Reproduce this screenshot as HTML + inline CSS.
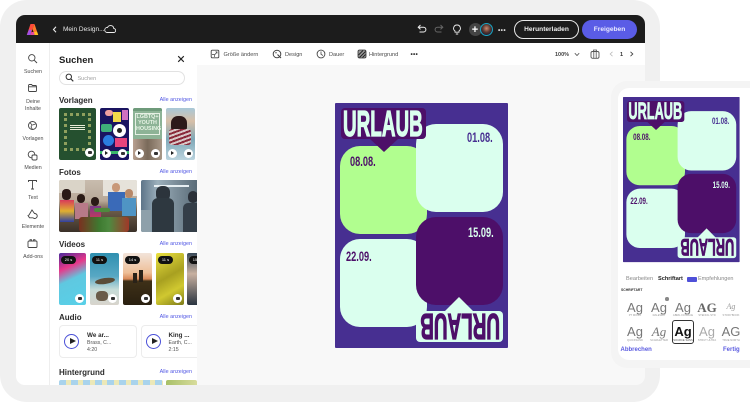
<!DOCTYPE html>
<html><head><meta charset="utf-8">
<style>
html,body{margin:0;padding:0;background:#fff;}
#r{position:relative;width:750px;height:402px;overflow:hidden;background:#fff;font-family:"Liberation Sans",sans-serif;color:#2c2c2c;}
#r div,#r span.a,#r svg{position:absolute;}
.t{white-space:nowrap;line-height:1;}
.nl{width:34px;left:16px;text-align:center;font-size:5.3px;color:#4b4b4b;line-height:7px;margin-top:1.5px;}
.h{left:59px;font-size:8px;font-weight:bold;color:#2c2c2c;white-space:nowrap;line-height:1;margin-top:1px;}
.al{left:140px;width:52px;text-align:right;font-size:5.4px;color:#5258e4;white-space:nowrap;line-height:1;margin-top:1.5px;}
.th{overflow:hidden;border-radius:2px;}
.bt{width:9px;height:9px;border-radius:50%;background:#fff;}
.bt:after{content:"";position:absolute;left:2.5px;top:3px;width:4px;height:3px;background:#333;border-radius:1px;}
.pl{width:9px;height:9px;border-radius:50%;background:#fff;}
.pl:after{content:"";position:absolute;left:3.2px;top:2.2px;border-left:3.6px solid #222;border-top:2.3px solid transparent;border-bottom:2.3px solid transparent;}
.dur{left:2px;top:3px;width:15px;height:8px;background:#111;border-radius:4px;color:#fff;font-size:4px;line-height:8px;text-align:center;}
.tb{font-size:5.6px;color:#4b4b4b;white-space:nowrap;line-height:1;top:52.5px;}
.ag{width:24px;text-align:center;line-height:1;color:#777;font-size:13px;}
.fl{width:24px;text-align:center;font-size:2.7px;color:#999;line-height:1;white-space:nowrap;}
.card{background:#fff;border:1px solid #ececec;border-radius:4px;box-sizing:border-box;}
.poster{width:173px;height:245px;background:#472f91;border-radius:1px;overflow:hidden;transform-origin:0 0;}
.u{font-family:"Liberation Sans",sans-serif;font-weight:bold;font-size:36px;white-space:nowrap;line-height:1;transform-origin:0 0;-webkit-text-stroke:1.2px currentColor;}
.d{font-family:"Liberation Sans",sans-serif;font-weight:bold;font-size:14px;white-space:nowrap;line-height:1;transform-origin:0 0;transform:scaleX(.66);}
</style></head><body>
<div id="r">
<!-- frame -->
<div style="left:0;top:0;width:660px;height:402px;background:#f0f0f0;border-radius:27px;"></div>
<!-- window -->
<div style="left:16px;top:15px;width:629px;height:370px;background:#f8f8f8;border-radius:9px;overflow:hidden;">
 <div style="left:0;top:0;width:629px;height:28px;background:#1c1c1c;"></div>
 <div style="left:0;top:28px;width:33px;height:342px;background:#fff;border-right:1px solid #eee;"></div>
 <div style="left:34px;top:28px;width:147px;height:342px;background:#fff;"></div>
 <div style="left:181px;top:28px;width:448px;height:22px;background:#fff;"></div>
</div>
<!-- topbar -->
<svg style="left:26px;top:23px" width="13" height="13" viewBox="0 0 13 13"><path d="M4.500 1h4L6.500 6 4.500 12H.8z" fill="#ff4a3a"/><path d="M.8 12 3 6.500 5.500 7 4.500 12z" fill="#a050e8"/><path d="M8.500 1l3.700 11H8.500L6.500 6z" fill="#ff7a2a"/><path d="M8.500 12h3.700L11 8.500 8 9z" fill="#ffc020"/><path d="M4.500 12 5.500 9H8l.5 3z" fill="#e04aa0"/></svg>
<svg style="left:52px;top:26px" width="6" height="7" viewBox="0 0 6 7"><path d="M4 .8 1.500 3.500 4 6.200" fill="none" stroke="#eee" stroke-width="1.100"/></svg>
<div class="t" style="left:63px;top:27px;font-size:6.500px;color:#e8e8e8;">Mein Design...</div>
<svg style="left:104px;top:24px" width="12" height="10" viewBox="0 0 12 10"><path d="M3 8.500h6.500a2 2 0 0 0 .3-4 3.300 3.300 0 0 0-6.300-1A2.500 2.500 0 0 0 3 8.500z" fill="none" stroke="#eee" stroke-width=".9"/></svg>
<svg style="left:417px;top:24px" width="10" height="10" viewBox="0 0 10 10"><path d="M3.500 1 1.200 3.200 3.500 5.400M1.500 3.200h5a2.300 2.300 0 0 1 0 4.800H2.500" fill="none" stroke="#eee" stroke-width="1"/></svg>
<svg style="left:434px;top:24px" width="10" height="10" viewBox="0 0 10 10"><path d="M6.500 1 8.800 3.200 6.500 5.400M8.500 3.200h-5a2.300 2.300 0 0 0 0 4.800h4" fill="none" stroke="#666" stroke-width="1"/></svg>
<svg style="left:452px;top:24px" width="10" height="11" viewBox="0 0 10 11"><path d="M5 1a3.300 3.300 0 0 0-2 6v1.200h4V7a3.300 3.300 0 0 0-2-6zM3.800 10h2.400" fill="none" stroke="#eee" stroke-width=".9"/></svg>
<div style="left:469px;top:23px;width:13px;height:13px;border-radius:50%;background:#444;"></div>
<div class="t" style="left:470px;top:23.500px;width:10px;text-align:center;color:#fff;font-size:11px;font-weight:bold;line-height:12px;">+</div>
<div style="left:480px;top:23px;width:11px;height:11px;border-radius:50%;background:radial-gradient(circle at 50% 40%,#c98a70 0,#5a3830 45%,#2b2230 70%);border:1.200px solid #19a5c4;"></div>
<div class="t" style="left:498px;top:27.500px;color:#ddd;font-size:6.500px;font-weight:bold;letter-spacing:.4px;line-height:5px;">•••</div>
<div class="t" style="left:514px;top:20px;width:65px;height:19px;box-sizing:border-box;border:1px solid #e8e8e8;border-radius:10px;color:#eee;font-size:6.600px;font-weight:bold;text-align:center;line-height:17px;">Herunterladen</div>
<div class="t" style="left:582px;top:20px;width:55px;height:19px;background:#5a5ce6;border-radius:10px;color:#e8e8ff;font-size:6.600px;font-weight:bold;text-align:center;line-height:19px;">Freigeben</div>

<!-- left nav -->
<svg style="left:27px;top:53px" width="11" height="11" viewBox="0 0 11 11"><circle cx="4.800" cy="4.800" r="3.200" fill="none" stroke="#444" stroke-width=".9"/><path d="M7.200 7.200 10 10" stroke="#444" stroke-width="1"/></svg>
<div class="nl" style="top:67px;">Suchen</div>
<svg style="left:27px;top:83px" width="11" height="10" viewBox="0 0 11 10"><path d="M1.500 2.500a1 1 0 0 1 1-1h2l1 1h3a1 1 0 0 1 1 1v4a1 1 0 0 1-1 1h-6a1 1 0 0 1-1-1zM1.500 3.800h8" fill="none" stroke="#444" stroke-width=".9"/></svg>
<div class="nl" style="top:97px;">Deine<br>Inhalte</div>
<svg style="left:27px;top:120px" width="11" height="11" viewBox="0 0 11 11"><circle cx="5.500" cy="5.500" r="4" fill="none" stroke="#444" stroke-width=".9"/><path d="M3 2.500l2 2.500-1 2 1.500 2.500M5.500 5l3-1" fill="none" stroke="#444" stroke-width=".8"/></svg>
<div class="nl" style="top:134px;">Vorlagen</div>
<svg style="left:27px;top:150px" width="11" height="11" viewBox="0 0 11 11"><circle cx="4.500" cy="4.500" r="3.300" fill="none" stroke="#444" stroke-width=".9"/><rect x="5" y="5" width="5" height="5" rx="1.200" fill="#fff" stroke="#444" stroke-width=".9"/></svg>
<div class="nl" style="top:163px;">Medien</div>
<svg style="left:27px;top:179px" width="11" height="11" viewBox="0 0 11 11"><path d="M1.500 3V1.500h8V3M5.500 1.500v8.500M4 10h3" fill="none" stroke="#444" stroke-width=".9"/></svg>
<div class="nl" style="top:193px;">Text</div>
<svg style="left:27px;top:208px" width="11" height="11" viewBox="0 0 11 11"><path d="M2 7l3-5 2.500 3.500a2.500 2.500 0 1 1-1.500 4.300H2.500L1 7.500z" fill="none" stroke="#444" stroke-width=".9"/></svg>
<div class="nl" style="top:222px;">Elemente</div>
<svg style="left:27px;top:238px" width="11" height="11" viewBox="0 0 11 11"><rect x="1" y="3" width="9" height="6.500" rx="1" fill="none" stroke="#444" stroke-width=".9"/><path d="M3 3V1.700h1.500V3M6.500 3V1.700H8V3" fill="none" stroke="#444" stroke-width=".8"/></svg>
<div class="nl" style="top:252px;">Add-ons</div>

<!-- panel -->
<div class="t" style="left:59px;top:56px;font-size:9.500px;font-weight:bold;color:#222;">Suchen</div>
<svg style="left:177px;top:55px" width="8" height="8" viewBox="0 0 8 8"><path d="M1.200 1.200l5.600 5.600M6.800 1.200 1.200 6.800" stroke="#222" stroke-width="1.100"/></svg>
<div style="left:59px;top:71px;width:126px;height:14px;box-sizing:border-box;border:1px solid #e2e2e2;border-radius:7px;background:#fff;"></div>
<svg style="left:65px;top:73px" width="9" height="9" viewBox="0 0 9 9"><circle cx="3.800" cy="3.800" r="2.700" fill="none" stroke="#333" stroke-width="1"/><path d="M5.800 5.800 8.300 8.300" stroke="#333" stroke-width="1.100"/></svg>
<div class="t" style="left:77.500px;top:76.500px;font-size:5.500px;color:#a0a0a0;">Suchen</div>

<div class="h" style="top:96px;">Vorlagen</div><div class="al" style="top:96px;">Alle anzeigen</div>
<div class="th" style="left:59px;top:108px;width:37px;height:52px;background:#25502f;">
 <div style="left:5px;top:5px;width:27px;height:38px;border:3px dotted #8fa05e;box-sizing:border-box;"></div>
 <div style="left:11px;top:17px;width:15px;height:6px;background:repeating-linear-gradient(#e8ecd8 0 1px,#25502f 1px 2px);"></div>
 <div class="bt" style="left:26px;top:40px;"></div>
</div>
<div class="th" style="left:100px;top:108px;width:29px;height:52px;background:#1a1460;">
 <div style="left:5px;top:2px;width:8px;height:6px;background:#f0a0a0;border-radius:3px;"></div>
 <div style="left:13px;top:4px;width:8px;height:10px;background:#f2d84a;"></div>
 <div style="left:22px;top:2px;width:6px;height:10px;background:#d070c0;"></div>
 <div style="left:1px;top:16px;width:11px;height:8px;background:#3fae7a;border-radius:2px;"></div>
 <div style="left:13px;top:16px;width:13px;height:13px;background:#fff;border-radius:50%;"></div>
 <div style="left:17px;top:20px;width:5px;height:5px;background:#222;border-radius:50%;"></div>
 <div style="left:3px;top:27px;width:11px;height:11px;background:#2a7de0;border-radius:50%;"></div>
 <div style="left:15px;top:30px;width:12px;height:9px;background:#e8447c;"></div>
 <div style="left:0;top:43px;width:29px;height:3px;background:#3ab86a;"></div>
 <div class="pl" style="left:1.500px;top:41px;"></div><div class="bt" style="left:18px;top:41px;"></div>
</div>
<div class="th" style="left:133px;top:108px;width:29px;height:52px;background:#8db396;">
 <div style="left:0;top:0;width:29px;height:3px;background:#6e9a7a;"></div>
 <div style="left:2px;top:5px;width:25px;height:22px;border:.7px solid #e6f0e4;box-sizing:border-box;"></div>
 <div class="t" style="left:3px;top:6px;width:23px;text-align:center;color:#e8f4e6;font-size:5.400px;font-weight:bold;line-height:6px;">LGBTQ+<br>YOUTH<br>HOUSING</div>
 <div style="left:0;top:31px;width:29px;height:21px;background:linear-gradient(90deg,#b8a090,#7a6a5a 50%,#a89888);"></div>
 <div class="pl" style="left:1.500px;top:41px;"></div><div class="bt" style="left:18px;top:41px;"></div>
</div>
<div class="th" style="left:166px;top:108px;width:29px;height:52px;background:linear-gradient(#a8c8d8 0,#d8c0a8 25%,#7fa8b8 60%,#bcd4de 100%);">
 <div style="left:5px;top:8px;width:16px;height:18px;background:#2d1a1a;border-radius:7px;"></div>
 <div style="left:3px;top:21px;width:22px;height:16px;background:repeating-linear-gradient(160deg,#8a2a3a 0 2px,#d8c8c8 2px 4px);border-radius:3px;"></div>
 <div class="pl" style="left:1.500px;top:41px;"></div><div class="bt" style="left:18px;top:41px;"></div>
</div>

<div class="h" style="top:168px;">Fotos</div><div class="al" style="top:168px;">Alle anzeigen</div>
<div class="th" style="left:59px;top:180px;width:78px;height:52px;background:linear-gradient(#c8bcae 0,#b8a898 40%,#6a5a48 60%,#3a3028 100%);">
 <div style="left:0;top:0;width:26px;height:13px;background:#dad4c8;"></div>
 <div style="left:44px;top:0;width:34px;height:16px;background:#e6e2da;"></div>
 <div style="left:3px;top:9px;width:9px;height:11px;background:#2a1a16;border-radius:4px;"></div>
 <div style="left:1px;top:20px;width:14px;height:22px;background:linear-gradient(#d83a5a,#e0b030,#3040a0);"></div>
 <div style="left:18px;top:14px;width:8px;height:9px;background:#2a1a16;border-radius:4px;"></div>
 <div style="left:16px;top:23px;width:13px;height:16px;background:#b87a88;"></div>
 <div style="left:32px;top:17px;width:8px;height:9px;background:#2a1a16;border-radius:4px;"></div>
 <div style="left:31px;top:26px;width:11px;height:13px;background:linear-gradient(#7a3a8a,#c83a5a);"></div>
 <div style="left:53px;top:3px;width:8px;height:9px;background:#c89878;border-radius:4px;"></div>
 <div style="left:49px;top:12px;width:17px;height:19px;background:#3a6ab8;"></div>
 <div style="left:66px;top:9px;width:8px;height:9px;background:#b88868;border-radius:4px;"></div>
 <div style="left:63px;top:18px;width:14px;height:18px;background:#4f94c4;"></div>
 <div style="left:35px;top:28px;width:16px;height:4px;background:#4e8a3e;border-radius:2px;"></div>
 <div style="left:20px;top:37px;width:50px;height:15px;background:linear-gradient(90deg,#7a3020,#3e7a30 40%,#4e8a40 60%,#a03828);border-radius:3px;"></div>
</div>
<div class="th" style="left:141px;top:180px;width:56px;height:52px;background:linear-gradient(90deg,#5e7488,#9cb0bc 30%,#7e909c 60%,#5a6c78);border-radius:2px 0 0 2px;">
 <div style="left:13px;top:5px;width:35px;height:1.500px;background:#e6eef2;"></div>
 <div style="left:15px;top:6px;width:14px;height:15px;background:#2c343c;border-radius:6px;"></div>
 <div style="left:11px;top:18px;width:22px;height:34px;background:#2e3840;border-radius:6px 6px 0 0;"></div>
 <div style="left:47px;top:11px;width:10px;height:12px;background:#2a3038;border-radius:5px;"></div>
 <div style="left:42px;top:23px;width:15px;height:29px;background:#343e48;border-radius:5px 0 0 0;"></div>
 <div style="left:0;top:30px;width:10px;height:22px;background:#8ea0aa;"></div>
</div>

<div class="h" style="top:240px;">Videos</div><div class="al" style="top:240px;">Alle anzeigen</div>
<div class="th" style="left:59px;top:253px;width:27px;height:52px;background:linear-gradient(155deg,#4a2a9a 0,#e8388a 28%,#5fc8e0 50%,#58d0e8 100%);"><div class="dur">20 s</div><div class="bt" style="left:16px;top:41px;"></div></div>
<div class="th" style="left:90px;top:253px;width:29px;height:52px;background:linear-gradient(#2f8fb0 0,#58a8c4 45%,#c6dcd8 70%,#d8d4cc 100%);">
 <div style="left:5px;top:25px;width:20px;height:6px;background:#5a4c38;border-radius:50%;transform:rotate(-8deg);"></div>
 <div style="left:6px;top:38px;width:12px;height:10px;background:#6a5c4a;border-radius:40%;"></div>
 <div class="dur">11 s</div><div class="bt" style="left:18px;top:41px;"></div></div>
<div class="th" style="left:123px;top:253px;width:29px;height:52px;background:linear-gradient(#f2e4da 0,#eebf98 38%,#d88a5a 50%,#3e3018 54%,#2a2010 100%);">
 <div style="left:10px;top:20px;width:4px;height:10px;background:#2a2218;"></div><div style="left:16px;top:17px;width:4px;height:12px;background:#2a2218;"></div>
 <div class="dur">14 s</div><div class="bt" style="left:18px;top:41px;"></div></div>
<div class="th" style="left:156px;top:253px;width:28px;height:52px;background:linear-gradient(150deg,#eae040 0,#a8a020 45%,#d0c830 70%,#7c7a18 100%);"><div class="dur">11 s</div><div class="bt" style="left:17px;top:41px;"></div></div>
<div class="th" style="left:187px;top:253px;width:10px;height:52px;background:linear-gradient(#384858,#c8b0a0 40%,#2a3440);border-radius:2px 0 0 2px;"><div class="dur" style="left:2px;">15 s</div></div>

<div class="h" style="top:312.500px;">Audio</div><div class="al" style="top:313px;">Alle anzeigen</div>
<div class="card" style="left:59px;top:325px;width:78px;height:33px;"></div>
<div class="card" style="left:141px;top:325px;width:60px;height:33px;"></div>
<div style="left:197px;top:320px;width:8px;height:42px;background:#f8f8f8;"></div>
<div style="left:64px;top:334px;width:15px;height:15px;box-sizing:border-box;border:1.400px solid #4a50d8;border-radius:50%;"></div>
<div style="left:69.500px;top:338px;border-left:6px solid #222;border-top:3.500px solid transparent;border-bottom:3.500px solid transparent;width:0;height:0;"></div>
<div style="left:146px;top:334px;width:15px;height:15px;box-sizing:border-box;border:1.400px solid #4a50d8;border-radius:50%;"></div>
<div style="left:151.500px;top:338px;border-left:6px solid #222;border-top:3.500px solid transparent;border-bottom:3.500px solid transparent;width:0;height:0;"></div>
<div class="t" style="left:87px;top:332.500px;font-size:6.300px;font-weight:bold;">We ar...</div>
<div class="t" style="left:87px;top:341px;font-size:5.200px;color:#555;">Brass, C...</div>
<div class="t" style="left:87px;top:348px;font-size:5.200px;color:#555;">4:20</div>
<div class="t" style="left:168.500px;top:332.500px;font-size:6.300px;font-weight:bold;">King ...</div>
<div class="t" style="left:168.500px;top:341px;font-size:5.200px;color:#555;">Earth, C...</div>
<div class="t" style="left:168.500px;top:348px;font-size:5.200px;color:#555;">2:15</div>

<div class="h" style="top:368px;">Hintergrund</div><div class="al" style="top:368px;">Alle anzeigen</div>
<div class="th" style="left:59px;top:380px;width:104px;height:5px;background:repeating-linear-gradient(90deg,#a9d3ec 0 7px,#ece8b8 7px 12px);border-radius:2px 2px 0 0;"></div>
<div class="th" style="left:166px;top:380px;width:31px;height:5px;background:linear-gradient(90deg,#a8c068,#d8dc9c);border-radius:2px 2px 0 0;"></div>

<!-- toolbar -->
<svg style="left:210px;top:49px" width="10" height="10" viewBox="0 0 10 10"><rect x="1.200" y="1.200" width="7.600" height="7.600" rx="1" fill="none" stroke="#444" stroke-width=".9"/><path d="M5 5.500 7 3M5.500 2.800H7v1.600M2 5.500h2.500V8" fill="none" stroke="#444" stroke-width=".7"/></svg>
<div class="tb t" style="left:223.500px;">Größe ändern</div>
<svg style="left:272px;top:49px" width="10" height="10" viewBox="0 0 10 10"><circle cx="5" cy="5" r="3.800" fill="none" stroke="#444" stroke-width="1"/><path d="M5.500 5.500 9 9" stroke="#444" stroke-width="1.100"/><circle cx="4" cy="3.800" r=".7" fill="#444"/></svg>
<div class="tb t" style="left:285px;">Design</div>
<svg style="left:316px;top:49px" width="10" height="10" viewBox="0 0 10 10"><circle cx="5" cy="5" r="3.900" fill="none" stroke="#444" stroke-width=".9"/><path d="M5 2.500V5.300L7 6.500" fill="none" stroke="#444" stroke-width=".8"/></svg>
<div class="tb t" style="left:329px;">Dauer</div>
<svg style="left:357px;top:49px" width="10" height="10" viewBox="0 0 10 10"><rect x="1" y="1" width="8" height="8" rx="1.500" fill="#999" stroke="#333" stroke-width=".8"/><path d="M1.500 6 6 1.500M2.500 8.500 8.500 2.500M5.500 8.500l3-3" stroke="#222" stroke-width=".9"/></svg>
<div class="tb t" style="left:369px;">Hintergrund</div>
<div class="t" style="left:410.500px;top:52.500px;color:#333;font-size:6.500px;font-weight:bold;line-height:4px;letter-spacing:.2px;">•••</div>
<div class="t" style="left:555px;top:52.500px;font-size:5.500px;font-weight:bold;color:#444;">100%</div>
<svg style="left:574px;top:52px" width="6" height="5" viewBox="0 0 6 5"><path d="M.8 1.200 3 3.500 5.200 1.200" fill="none" stroke="#555" stroke-width=".8"/></svg>
<svg style="left:590px;top:49px" width="10" height="10" viewBox="0 0 10 10"><rect x="1" y="2.500" width="8" height="6.800" rx="1.500" fill="none" stroke="#555" stroke-width=".9"/><path d="M3.500 2.500V1h3v1.500M3.800 2.500v6.800M6.200 2.500v6.800" fill="none" stroke="#555" stroke-width=".8"/></svg>
<svg style="left:609px;top:51px" width="5" height="6" viewBox="0 0 5 6"><path d="M3.500.8 1.200 3l2.300 2.200" fill="none" stroke="#bbb" stroke-width=".8"/></svg>
<div class="t" style="left:620px;top:52.500px;font-size:5.500px;font-weight:bold;color:#333;">1</div>
<svg style="left:629px;top:51px" width="5" height="6" viewBox="0 0 5 6"><path d="M1.500.8 3.800 3 1.500 5.200" fill="none" stroke="#444" stroke-width=".9"/></svg>

<!-- main poster -->
<div class="poster" style="left:335px;top:102.500px;">
 <div style="left:5px;top:43px;width:87px;height:88px;background:#b1fe8f;border-radius:20px;"></div>
 <div style="left:81px;top:21px;width:87px;height:88px;background:#daffee;border-radius:20px;"></div>
 <div style="left:6px;top:5.500px;width:85px;height:31px;background:#4d0f69;border-radius:4px;"></div>
 <div style="left:35px;top:36px;width:0;height:0;border-left:14px solid transparent;border-right:14px solid transparent;border-top:13.500px solid #4d0f69;"></div>
 <div class="u" style="left:8px;top:3px;color:#daffee;transform:scaleX(.525);">URLAUB</div>
 <div class="d" style="left:132px;top:27.700px;color:#472f91;">01.08.</div>
 <div class="d" style="left:15px;top:51.700px;color:#4d0f69;">08.08.</div>
 <div style="left:5px;top:136px;width:87px;height:88px;background:#daffee;border-radius:20px;"></div>
 <div style="left:81px;top:114px;width:87px;height:88px;background:#4d0f69;border-radius:20px;"></div>
 <div class="d" style="left:133px;top:122.700px;color:#daffee;">15.09.</div>
 <div class="d" style="left:11px;top:146.700px;color:#4d0f69;">22.09.</div>
 <div style="left:81px;top:208px;width:87px;height:31px;background:#daffee;border-radius:4px;"></div>
 <div style="left:110px;top:194.500px;width:0;height:0;border-left:14px solid transparent;border-right:14px solid transparent;border-bottom:14px solid #daffee;"></div>
 <div class="u" style="left:164.500px;top:241px;color:#4d0f69;transform:rotate(180deg) scaleX(.525);">URLAUB</div>
</div>

<!-- phone -->
<div style="left:611px;top:81px;width:139px;height:287px;background:#f4f4f4;border-radius:16px 0 0 16px;"></div>
<div style="left:618px;top:88px;width:132px;height:272px;background:#fff;border-radius:11px 0 0 11px;"></div>
<div class="poster" style="left:623px;top:97px;transform:scale(.674);">
 <div style="left:5px;top:43px;width:87px;height:88px;background:#b1fe8f;border-radius:20px;"></div>
 <div style="left:81px;top:21px;width:87px;height:88px;background:#daffee;border-radius:20px;"></div>
 <div style="left:6px;top:5.500px;width:85px;height:31px;background:#4d0f69;border-radius:4px;"></div>
 <div style="left:35px;top:36px;width:0;height:0;border-left:14px solid transparent;border-right:14px solid transparent;border-top:13.500px solid #4d0f69;"></div>
 <div class="u" style="left:8px;top:3px;color:#daffee;transform:scaleX(.525);">URLAUB</div>
 <div class="d" style="left:132px;top:27.700px;color:#472f91;">01.08.</div>
 <div class="d" style="left:15px;top:51.700px;color:#4d0f69;">08.08.</div>
 <div style="left:5px;top:136px;width:87px;height:88px;background:#daffee;border-radius:20px;"></div>
 <div style="left:81px;top:114px;width:87px;height:88px;background:#4d0f69;border-radius:20px;"></div>
 <div class="d" style="left:133px;top:122.700px;color:#daffee;">15.09.</div>
 <div class="d" style="left:11px;top:146.700px;color:#4d0f69;">22.09.</div>
 <div style="left:81px;top:208px;width:87px;height:31px;background:#daffee;border-radius:4px;"></div>
 <div style="left:110px;top:194.500px;width:0;height:0;border-left:14px solid transparent;border-right:14px solid transparent;border-bottom:14px solid #daffee;"></div>
 <div class="u" style="left:164.500px;top:241px;color:#4d0f69;transform:rotate(180deg) scaleX(.525);">URLAUB</div>
</div>

<div class="t" style="left:626px;top:277px;font-size:5.600px;color:#888;">Bearbeiten</div>
<div class="t" style="left:658px;top:277px;font-size:5.600px;font-weight:bold;color:#222;">Schriftart</div>
<div style="left:686.500px;top:276.500px;width:10px;height:5.500px;background:#4f50d8;border-radius:1px;"></div>
<div class="t" style="left:698px;top:277px;font-size:5.500px;color:#888;">Empfehlungen</div>
<div class="t" style="left:621px;top:289px;font-size:3.400px;font-weight:bold;color:#333;">SCHRIFTART</div>

<div class="ag" style="left:623px;top:301px;">Ag</div><div class="fl" style="left:623px;top:315px;">PT MONO</div>
<div class="ag" style="left:647px;top:301px;">Ag</div><div class="fl" style="left:647px;top:315px;">RALEWAY</div>
<div style="left:665px;top:297px;width:3.500px;height:3.500px;background:#888;border-radius:50%;"></div>
<div class="ag" style="left:671px;top:301px;">Ag</div><div class="fl" style="left:671px;top:315px;">ABRIL FATFACE</div>
<div class="ag" style="left:695px;top:301px;font-family:'Liberation Serif',serif;font-weight:bold;color:#666;">AG</div><div class="fl" style="left:695px;top:315px;">STENCIL STD</div>
<div class="ag" style="left:719px;top:303px;font-size:8px;font-family:'Liberation Serif',serif;font-style:italic;color:#999;">Ag</div><div class="fl" style="left:719px;top:315px;">STORYBOOK</div>

<div style="left:672px;top:319.500px;width:22px;height:24px;box-sizing:border-box;border:1.300px solid #333;border-radius:3px;"></div>
<div class="ag" style="left:623px;top:325px;">Ag</div><div class="fl" style="left:623px;top:339.500px;">QUICKSAND</div>
<div class="ag" style="left:647px;top:325px;font-family:'Liberation Serif',serif;font-style:italic;">Ag</div><div class="fl" style="left:647px;top:339.500px;">SCARLETTER</div>
<div class="ag" style="left:671px;top:325px;font-weight:bold;color:#111;">Ag</div><div class="fl" style="left:671px;top:339.500px;color:#555;">SOURCE SANS</div>
<div class="ag" style="left:695px;top:325px;color:#aaa;font-weight:normal;">Ag</div><div class="fl" style="left:695px;top:339.500px;">STRUT ULTRA</div>
<div class="ag" style="left:719px;top:325px;color:#777;">AG</div><div class="fl" style="left:719px;top:339.500px;">TRUE NORTH</div>

<div class="t" style="left:620.500px;top:347px;font-size:6px;font-weight:bold;color:#5b5be0;">Abbrechen</div>
<div class="t" style="left:723px;top:347px;font-size:6px;font-weight:bold;color:#5b5be0;">Fertig</div>
</div>
</body></html>
